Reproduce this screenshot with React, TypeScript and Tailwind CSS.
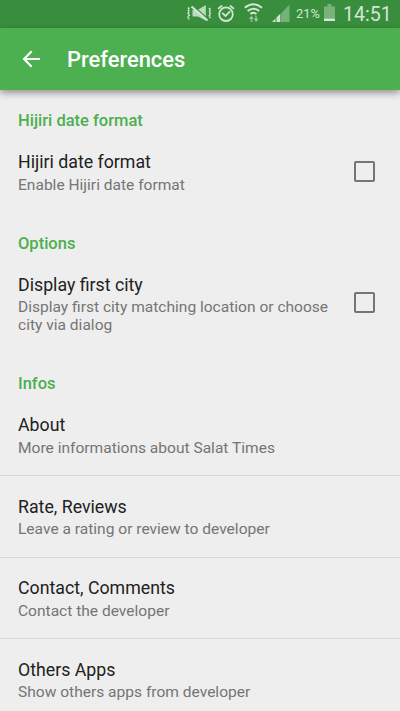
import React from 'react';

function StatusBar() {
  return (
    <div className="flex h-[28px] items-start bg-[#388e3c] pl-[186px] text-[#d3e6d4]">
      {/* Vibration with muted speaker */}
      <svg className="h-[28px] w-[27px] shrink-0" viewBox="0 0 27 28" fill="none" stroke="currentColor">
        <path d="M3.2 7.5l-1.2 2 1.2 2-1.2 2 1.2 2-1.2 2 1.2 2M23.2 8l1.2 2-1.2 2 1.2 2-1.2 2 1.2 2" strokeWidth="1.6" strokeDasharray="2 .6" />
        <path d="M6.5 9.8H12L19.8 5v15.5L12 16.5H6.5z" fill="currentColor" fillOpacity=".85" stroke="none" />
        <path d="M7.5 6.3l14 12.3" stroke="#388e3c" strokeWidth="1.3" />
        <path d="M5.5 6.5l16 14" strokeWidth="2" />
      </svg>
      {/* Alarm */}
      <svg className="ml-[4px] h-[28px] w-[19px] shrink-0" viewBox="0 0 19 28" fill="none" stroke="currentColor" strokeWidth="1.8" strokeLinecap="round">
        <circle cx="9" cy="14.2" r="6.8" />
        <path d="M1.7 8.4L4.6 6M16.4 8.4L13.5 6M5.7 13.4l2.8 2.6 4-4.2" />
      </svg>
      {/* Wi-Fi with data arrows */}
      <svg className="ml-[8px] h-[28px] w-[20px] shrink-0" viewBox="0 0 20 28" fill="none" stroke="currentColor" strokeWidth="2">
        <path d="M.8 7.8Q9.4 .8 18 7.8M3.6 11Q9.4 6.4 15.2 11M6.4 14Q9.4 11.6 12.4 14" />
        <path d="M7.5 22v-5M12 15.5v5" strokeOpacity=".5" strokeWidth="1.7" />
        <path d="M4.7 19l2.8-3.6 2.3 3.6zM9.7 18.6l2.3 3.6 2.8-3.6z" fill="currentColor" fillOpacity=".5" stroke="none" />
      </svg>
      {/* Cellular signal */}
      <svg className="ml-[8px] h-[28px] w-[18px] shrink-0" viewBox="0 0 18 28" fill="currentColor">
        <path d="M9 13.5L17.5 4.5V22H9z" fillOpacity=".4" />
        <path d="M0 22l3.5-3.5V22zM4.5 17.5l3.8-3.8V22H4.5z" />
      </svg>
      <span className="ml-[6px] w-[27px] shrink-0 text-[12.8px] leading-[28px]">21%</span>
      {/* Battery */}
      <svg className="ml-[1px] h-[28px] w-[12px] shrink-0" viewBox="0 0 12 28" fill="currentColor">
        <path d="M3.5 4h4v2.5H11V18.5H0V6.5h3.5z" fillOpacity=".42" />
        <path d="M0 18.5h11V21H0z" />
      </svg>
      <span className="ml-[7px] shrink-0 pt-px text-[19.6px] leading-[28px]">14:51</span>
    </div>
  );
}

function Header({ children }: { children: string }) {
  return <h2 className="h-[41.5px] pt-[20px] pl-[18px] text-[16.5px] leading-[21px] font-medium text-[#4caf50]">{children}</h2>;
}

function Row({ title, children, check, line }: { title: string; children: React.ReactNode; check?: boolean; line?: boolean }) {
  return (
    <div className={`flex items-center justify-between pl-[18px] pr-[25px] ${line ? 'border-b border-[#d8d8d8]' : ''}`}>
      <div className={`pt-[18.5px] ${line ? 'pb-[18.5px]' : 'pb-[19px]'}`}>
        <div className="text-[17.75px] leading-[24px] text-[#212121]">{title}</div>
        <div className="mt-[1.5px] text-[15.55px] leading-[18px] whitespace-nowrap text-[#757575]">{children}</div>
      </div>
      {check && <div className="mb-[1.2px] size-[21px] rounded-[2px] border-2 border-[#757575]" />}
    </div>
  );
}

export default function App() {
  return (
    <div className="h-[711px] w-[400px] overflow-hidden bg-[#eeeeee] font-['Roboto',sans-serif]">
      <StatusBar />
      <div className="flex h-[62px] items-center bg-[#4caf50] pt-[2px] pl-[22px] text-[21.9px] font-medium text-white shadow-[0_3px_7px_rgba(0,0,0,0.38)]">
        <svg className="mr-[27px] mb-[2px] h-[18px] w-[18px]" viewBox="0 0 18 18" fill="none" stroke="currentColor" strokeWidth="2.1">
          <path d="M18 9H2M9.7 1.3L2 9l7.7 7.7" />
        </svg>
        Preferences
      </div>
      <Header>Hijiri date format</Header>
      <Row title="Hijiri date format" check>Enable Hijiri date format</Row>
      <Header>Options</Header>
      <Row title="Display first city" check>Display first city matching location or choose<br />city via dialog</Row>
      <Header>Infos</Header>
      <Row title="About" line>More informations about Salat Times</Row>
      <Row title="Rate, Reviews" line>Leave a rating or review to developer</Row>
      <Row title="Contact, Comments" line>Contact the developer</Row>
      <Row title="Others Apps">Show others apps from developer</Row>
    </div>
  );
}
